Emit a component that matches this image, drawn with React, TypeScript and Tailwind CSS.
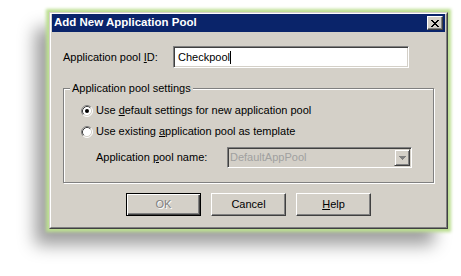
import type { ReactNode } from "react";
import clsx from "clsx";

function Radio({ checked }: { checked?: boolean }) {
  return (
    <svg width="12" height="12" viewBox="0 0 12 12" className="shrink-0">
      <circle cx="6" cy="6" r="5" fill="#fff" />
      <path d="M2.11 9.89 A5.5 5.5 0 0 1 9.89 2.11" stroke="#808080" fill="none" />
      <path d="M9.89 2.11 A5.5 5.5 0 0 1 2.11 9.89" stroke="#fff" fill="none" />
      <path d="M2.82 9.18 A4.5 4.5 0 0 1 9.18 2.82" stroke="#404040" fill="none" />
      <path d="M9.18 2.82 A4.5 4.5 0 0 1 2.82 9.18" stroke="#d4d0c8" fill="none" />
      {checked && <circle cx="6" cy="6" r="2" fill="#000" />}
    </svg>
  );
}

function Button({
  children,
  disabled,
  isDefault,
}: {
  children: ReactNode;
  disabled?: boolean;
  isDefault?: boolean;
}) {
  return (
    <button
      className={clsx(
        "w-[75px] h-[23px] bg-[#d4d0c8] text-[11px] leading-none flex items-center justify-center",
        isDefault
          ? "border border-black shadow-[inset_1px_1px_0_#fff,inset_-1px_-1px_0_#404040,inset_-2px_-2px_0_#808080]"
          : "border border-t-white border-l-white border-r-[#404040] border-b-[#404040] shadow-[inset_-1px_-1px_0_#808080]",
        disabled ? "text-[#808080] [text-shadow:1px_1px_0_#fff]" : "text-black"
      )}
    >
      {children}
    </button>
  );
}

export default function App() {
  return (
    <div className="min-h-[276px] bg-white pt-[12px] pl-[49px] font-['Liberation_Sans',Arial,sans-serif] text-[11px] text-black">
      {/* window frame */}
      <div className="w-[399px] bg-[#d4d0c8] border border-t-[#d4d0c8] border-l-[#d4d0c8] border-r-[#404040] border-b-[#404040] shadow-[0_0_3px_3px_#bddf93,-14px_16px_16px_rgba(0,0,0,0.38)]">
        <div className="border border-t-white border-l-white border-r-[#808080] border-b-[#808080] px-px">
          {/* title bar */}
          <div className="h-[18px] bg-[#0a246a] flex items-center justify-between pl-[2px] pr-[2px]">
            <span className="text-white font-bold text-[11.5px] leading-none">
              Add New Application Pool
            </span>
            <div className="w-[16px] h-[14px] bg-[#d4d0c8] border border-t-white border-l-white border-r-[#404040] border-b-[#404040] shadow-[inset_-1px_-1px_0_#808080] flex items-center justify-center">
              <svg width="8" height="7" viewBox="0 0 8 7">
                <path d="M0 0h2v1H0zM6 0h2v1H6zM1 1h2v1H1zM5 1h2v1H5zM2 2h4v1H2zM3 3h2v1H3zM2 4h4v1H2zM1 5h2v1H1zM5 5h2v1H5zM0 6h2v1H0zM6 6h2v1H6z" fill="#000" />
              </svg>
            </div>
          </div>

          {/* body */}
          <div className="px-[11px] pt-[14px] pb-[11px]">
            <div className="flex items-center h-[22px]">
              <span className="w-[110px] shrink-0">
                Application pool <span className="underline">I</span>D:
              </span>
              <div className="w-[236px] h-[22px] bg-white border border-t-[#808080] border-l-[#808080] border-b-white border-r-white shadow-[inset_1px_1px_0_#404040,inset_-1px_-1px_0_#d4d0c8] flex items-center pl-[4px]">
                <span>Checkpool</span>
                <span className="w-px h-[13px] bg-black" />
              </div>
            </div>

            <fieldset className="mt-[14px] border border-[#808080] shadow-[inset_1px_1px_0_#fff,1px_1px_0_#fff] pb-[14px]">
              <legend className="ml-[6px] px-[2px] leading-[13px] bg-[#d4d0c8]">
                Application pool settings
              </legend>
              <div className="mt-[9px] pl-[17px] flex items-center gap-[3px] h-[13px]">
                <Radio checked />
                <span>
                  Use <span className="underline">d</span>efault settings for new application pool
                </span>
              </div>
              <div className="mt-[8px] pl-[17px] flex items-center gap-[3px] h-[13px]">
                <Radio />
                <span>
                  Use existing <span className="underline">a</span>pplication pool as template
                </span>
              </div>
              <div className="mt-[9px] flex items-center h-[21px] pl-[32px]">
                <span className="w-[131px] shrink-0">
                  Application <span className="underline">p</span>ool name:
                </span>
                <div className="w-[185px] h-[21px] bg-[#d4d0c8] border border-t-[#808080] border-l-[#808080] border-b-white border-r-white shadow-[inset_1px_1px_0_#404040,inset_-1px_-1px_0_#d4d0c8] flex items-center justify-between pl-[2px] pr-[1px]">
                  <span className="text-[#a0a0a0]">DefaultAppPool</span>
                  <div className="w-[16px] h-[17px] border border-t-[#d4d0c8] border-l-[#d4d0c8] border-r-[#404040] border-b-[#404040] shadow-[inset_1px_1px_0_#fff,inset_-1px_-1px_0_#808080] flex items-center justify-center">
                    <svg width="7" height="4" viewBox="0 0 7 4">
                      <path d="M0 0h7v1H0zM1 1h5v1H1zM2 2h3v1H2zM3 3h1v1H3z" fill="#808080" />
                    </svg>
                  </div>
                </div>
              </div>
            </fieldset>

            <div className="mt-[10px] flex justify-center gap-[10px]">
              <Button disabled isDefault>
                OK
              </Button>
              <Button>Cancel</Button>
              <Button>
                <span className="underline">H</span>elp
              </Button>
            </div>
          </div>
        </div>
      </div>
    </div>
  );
}
